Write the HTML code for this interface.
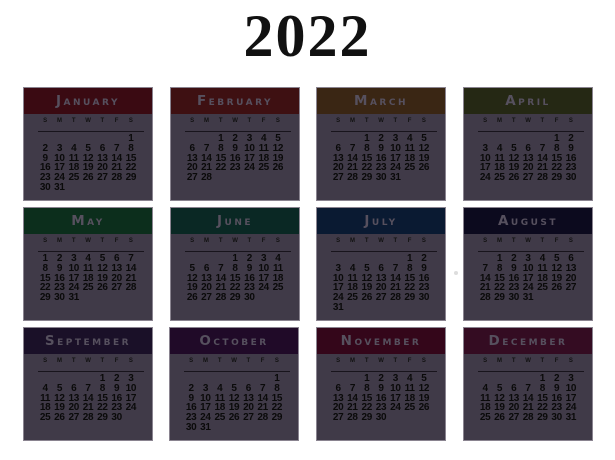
<!DOCTYPE html>
<html><head><meta charset="utf-8"><style>
body{margin:0;width:615px;height:460px;background:#fff;position:relative;overflow:hidden;font-family:"Liberation Sans",sans-serif}
.t{position:absolute;left:0;width:615px;top:2px;text-align:center;font-family:"Liberation Serif",serif;font-weight:bold;font-size:60px;line-height:68px;color:#111;letter-spacing:2px}
.c{position:absolute;width:128px;height:112px;background:#403a48;box-shadow:0 0 0 1px #8a8490}
.h{height:26px;line-height:27px;text-align:center;color:#56505e;font-size:13.5px;font-weight:bold;font-variant:small-caps;letter-spacing:2.5px;font-family:"DejaVu Sans",sans-serif}
.w{position:absolute;left:14px;top:29px;width:100px;display:grid;grid-template-columns:repeat(7,14.3px);font-size:6px;font-weight:bold;color:#111;text-align:center;line-height:8px}
.l{position:absolute;left:14px;top:43px;width:106px;height:1px;background:#18141c}
.d{position:absolute;left:14px;top:46px;display:grid;grid-template-columns:repeat(7,14.3px);grid-auto-rows:9.8px;font-size:10px;font-weight:bold;color:#0a0a0a;text-align:center;line-height:10px;letter-spacing:-0.3px;font-family:"Liberation Sans",sans-serif}
</style></head><body>
<div class="t">2022</div>
<div style="position:absolute;left:454px;top:271px;width:4px;height:4px;border-radius:2px;background:#ddd"></div>

<div class="c" style="left:24px;top:88px"><div class="h" style="background:#3a0a12">January</div><div class="w"><span>S</span><span>M</span><span>T</span><span>W</span><span>T</span><span>F</span><span>S</span></div><div class="l"></div><div class="d"><span></span><span></span><span></span><span></span><span></span><span></span><span>1</span><span>2</span><span>3</span><span>4</span><span>5</span><span>6</span><span>7</span><span>8</span><span>9</span><span>10</span><span>11</span><span>12</span><span>13</span><span>14</span><span>15</span><span>16</span><span>17</span><span>18</span><span>19</span><span>20</span><span>21</span><span>22</span><span>23</span><span>24</span><span>25</span><span>26</span><span>27</span><span>28</span><span>29</span><span>30</span><span>31</span></div></div>

<div class="c" style="left:171px;top:88px"><div class="h" style="background:#3e1012">February</div><div class="w"><span>S</span><span>M</span><span>T</span><span>W</span><span>T</span><span>F</span><span>S</span></div><div class="l"></div><div class="d"><span></span><span></span><span>1</span><span>2</span><span>3</span><span>4</span><span>5</span><span>6</span><span>7</span><span>8</span><span>9</span><span>10</span><span>11</span><span>12</span><span>13</span><span>14</span><span>15</span><span>16</span><span>17</span><span>18</span><span>19</span><span>20</span><span>21</span><span>22</span><span>23</span><span>24</span><span>25</span><span>26</span><span>27</span><span>28</span></div></div>

<div class="c" style="left:317px;top:88px"><div class="h" style="background:#3a2614">March</div><div class="w"><span>S</span><span>M</span><span>T</span><span>W</span><span>T</span><span>F</span><span>S</span></div><div class="l"></div><div class="d"><span></span><span></span><span>1</span><span>2</span><span>3</span><span>4</span><span>5</span><span>6</span><span>7</span><span>8</span><span>9</span><span>10</span><span>11</span><span>12</span><span>13</span><span>14</span><span>15</span><span>16</span><span>17</span><span>18</span><span>19</span><span>20</span><span>21</span><span>22</span><span>23</span><span>24</span><span>25</span><span>26</span><span>27</span><span>28</span><span>29</span><span>30</span><span>31</span></div></div>

<div class="c" style="left:464px;top:88px"><div class="h" style="background:#252814">April</div><div class="w"><span>S</span><span>M</span><span>T</span><span>W</span><span>T</span><span>F</span><span>S</span></div><div class="l"></div><div class="d"><span></span><span></span><span></span><span></span><span></span><span>1</span><span>2</span><span>3</span><span>4</span><span>5</span><span>6</span><span>7</span><span>8</span><span>9</span><span>10</span><span>11</span><span>12</span><span>13</span><span>14</span><span>15</span><span>16</span><span>17</span><span>18</span><span>19</span><span>20</span><span>21</span><span>22</span><span>23</span><span>24</span><span>25</span><span>26</span><span>27</span><span>28</span><span>29</span><span>30</span></div></div>

<div class="c" style="left:24px;top:208px"><div class="h" style="background:#0c2e1c">May</div><div class="w"><span>S</span><span>M</span><span>T</span><span>W</span><span>T</span><span>F</span><span>S</span></div><div class="l"></div><div class="d"><span>1</span><span>2</span><span>3</span><span>4</span><span>5</span><span>6</span><span>7</span><span>8</span><span>9</span><span>10</span><span>11</span><span>12</span><span>13</span><span>14</span><span>15</span><span>16</span><span>17</span><span>18</span><span>19</span><span>20</span><span>21</span><span>22</span><span>23</span><span>24</span><span>25</span><span>26</span><span>27</span><span>28</span><span>29</span><span>30</span><span>31</span></div></div>

<div class="c" style="left:171px;top:208px"><div class="h" style="background:#0a2824">June</div><div class="w"><span>S</span><span>M</span><span>T</span><span>W</span><span>T</span><span>F</span><span>S</span></div><div class="l"></div><div class="d"><span></span><span></span><span></span><span>1</span><span>2</span><span>3</span><span>4</span><span>5</span><span>6</span><span>7</span><span>8</span><span>9</span><span>10</span><span>11</span><span>12</span><span>13</span><span>14</span><span>15</span><span>16</span><span>17</span><span>18</span><span>19</span><span>20</span><span>21</span><span>22</span><span>23</span><span>24</span><span>25</span><span>26</span><span>27</span><span>28</span><span>29</span><span>30</span></div></div>

<div class="c" style="left:317px;top:208px"><div class="h" style="background:#0a1a32">July</div><div class="w"><span>S</span><span>M</span><span>T</span><span>W</span><span>T</span><span>F</span><span>S</span></div><div class="l"></div><div class="d"><span></span><span></span><span></span><span></span><span></span><span>1</span><span>2</span><span>3</span><span>4</span><span>5</span><span>6</span><span>7</span><span>8</span><span>9</span><span>10</span><span>11</span><span>12</span><span>13</span><span>14</span><span>15</span><span>16</span><span>17</span><span>18</span><span>19</span><span>20</span><span>21</span><span>22</span><span>23</span><span>24</span><span>25</span><span>26</span><span>27</span><span>28</span><span>29</span><span>30</span><span>31</span></div></div>

<div class="c" style="left:464px;top:208px"><div class="h" style="background:#0c0a1e">August</div><div class="w"><span>S</span><span>M</span><span>T</span><span>W</span><span>T</span><span>F</span><span>S</span></div><div class="l"></div><div class="d"><span></span><span>1</span><span>2</span><span>3</span><span>4</span><span>5</span><span>6</span><span>7</span><span>8</span><span>9</span><span>10</span><span>11</span><span>12</span><span>13</span><span>14</span><span>15</span><span>16</span><span>17</span><span>18</span><span>19</span><span>20</span><span>21</span><span>22</span><span>23</span><span>24</span><span>25</span><span>26</span><span>27</span><span>28</span><span>29</span><span>30</span><span>31</span></div></div>

<div class="c" style="left:24px;top:328px"><div class="h" style="background:#1a1028">September</div><div class="w"><span>S</span><span>M</span><span>T</span><span>W</span><span>T</span><span>F</span><span>S</span></div><div class="l"></div><div class="d"><span></span><span></span><span></span><span></span><span>1</span><span>2</span><span>3</span><span>4</span><span>5</span><span>6</span><span>7</span><span>8</span><span>9</span><span>10</span><span>11</span><span>12</span><span>13</span><span>14</span><span>15</span><span>16</span><span>17</span><span>18</span><span>19</span><span>20</span><span>21</span><span>22</span><span>23</span><span>24</span><span>25</span><span>26</span><span>27</span><span>28</span><span>29</span><span>30</span></div></div>

<div class="c" style="left:170px;top:328px"><div class="h" style="background:#200a28">October</div><div class="w"><span>S</span><span>M</span><span>T</span><span>W</span><span>T</span><span>F</span><span>S</span></div><div class="l"></div><div class="d"><span></span><span></span><span></span><span></span><span></span><span></span><span>1</span><span>2</span><span>3</span><span>4</span><span>5</span><span>6</span><span>7</span><span>8</span><span>9</span><span>10</span><span>11</span><span>12</span><span>13</span><span>14</span><span>15</span><span>16</span><span>17</span><span>18</span><span>19</span><span>20</span><span>21</span><span>22</span><span>23</span><span>24</span><span>25</span><span>26</span><span>27</span><span>28</span><span>29</span><span>30</span><span>31</span></div></div>

<div class="c" style="left:317px;top:328px"><div class="h" style="background:#34061a">November</div><div class="w"><span>S</span><span>M</span><span>T</span><span>W</span><span>T</span><span>F</span><span>S</span></div><div class="l"></div><div class="d"><span></span><span></span><span>1</span><span>2</span><span>3</span><span>4</span><span>5</span><span>6</span><span>7</span><span>8</span><span>9</span><span>10</span><span>11</span><span>12</span><span>13</span><span>14</span><span>15</span><span>16</span><span>17</span><span>18</span><span>19</span><span>20</span><span>21</span><span>22</span><span>23</span><span>24</span><span>25</span><span>26</span><span>27</span><span>28</span><span>29</span><span>30</span></div></div>

<div class="c" style="left:464px;top:328px"><div class="h" style="background:#340c22">December</div><div class="w"><span>S</span><span>M</span><span>T</span><span>W</span><span>T</span><span>F</span><span>S</span></div><div class="l"></div><div class="d"><span></span><span></span><span></span><span></span><span>1</span><span>2</span><span>3</span><span>4</span><span>5</span><span>6</span><span>7</span><span>8</span><span>9</span><span>10</span><span>11</span><span>12</span><span>13</span><span>14</span><span>15</span><span>16</span><span>17</span><span>18</span><span>19</span><span>20</span><span>21</span><span>22</span><span>23</span><span>24</span><span>25</span><span>26</span><span>27</span><span>28</span><span>29</span><span>30</span><span>31</span></div></div>
</body></html>
